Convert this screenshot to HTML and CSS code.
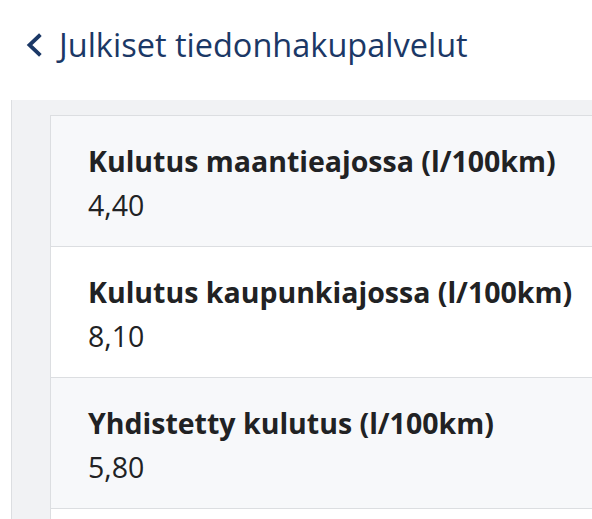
FILE: index.html
```html
<!DOCTYPE html>
<html>
  <head>
    <link rel="stylesheet" href="styles.css">
  </head>
  <body>
    <div class="top-bar">
      <a class="back-link" href="#">
        <svg class="chevron" width="17" height="24" viewBox="0 0 17 24">
          <path d="M14 3 L4.5 12 L14 21" fill="none" stroke="#1b3866" stroke-width="3.8" stroke-linecap="square" stroke-linejoin="miter"/>
        </svg>
        <span>Julkiset tiedonhakupalvelut</span>
      </a>
    </div>
    <div class="content">
      <div class="side-strip"></div>
      <div class="card-area">
        <div class="card">
          <div class="row shaded">
            <div class="label">Kulutus maantieajossa (l/100km)</div>
            <div class="value">4,40</div>
          </div>
          <div class="row">
            <div class="label">Kulutus kaupunkiajossa (l/100km)</div>
            <div class="value">8,10</div>
          </div>
          <div class="row shaded">
            <div class="label">Yhdistetty kulutus (l/100km)</div>
            <div class="value">5,80</div>
          </div>
          <div class="row"></div>
        </div>
      </div>
    </div>
  </body>
</html>
```

FILE: styles.css
```css
body {
  margin: 0;
  padding: 0;
  font-family: "Open Sans", "Noto Sans", sans-serif;
  background-color: #f1f2f4;
  overflow: hidden;
}
.top-bar {
  background: #fff;
  height: 100px;
  display: flex;
  align-items: center;
  padding-left: 25px;
}
.back-link {
  display: flex;
  align-items: center;
  gap: 17px;
  color: #1b3866;
  text-decoration: none;
  font-size: 32.5px;
  margin-top: -12px;
}
.chevron {
  display: block;
  margin-top: 1px;
}
.content {
  display: flex;
  min-height: 419px;
}
.side-strip {
  width: 11px;
  background: #fff;
  border-right: 1px solid #dcdee1;
}
.card-area {
  flex: 1;
  padding: 15px 0 0 38px;
}
.card {
  border-left: 1px solid #dcdee1;
  border-top: 1px solid #dcdee1;
}
.row {
  background: #fff;
  border-bottom: 1px solid #dcdee1;
  height: 131px;
  box-sizing: border-box;
  padding: 23px 0 0 37px;
  color: #212224;
  font-size: 28.5px;
  line-height: 44px;
  white-space: nowrap;
}
.row.shaded {
  background: #f7f8fa;
}
.label {
  font-weight: 700;
}
```
